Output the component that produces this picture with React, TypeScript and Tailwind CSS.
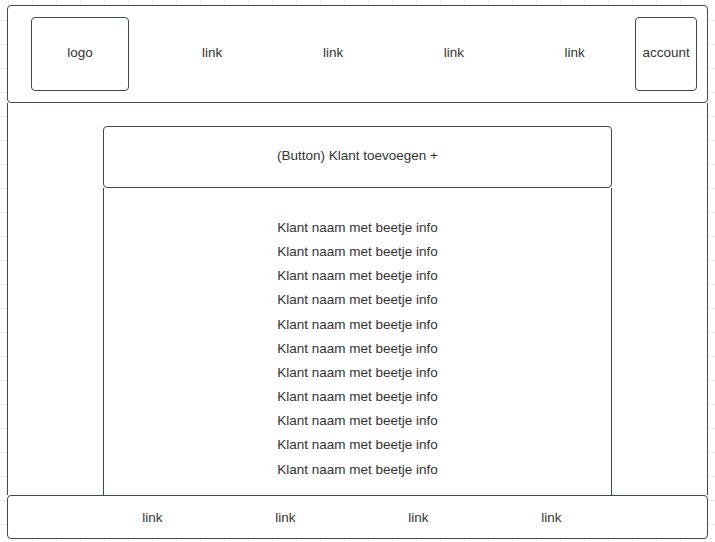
import React from "react";

const B = "border-[#42464d]";

export default function App() {
  const items = Array.from({ length: 11 }, () => "Klant naam met beetje info");
  return (
    <div
      className="w-[715px] h-[542px] overflow-hidden bg-white bg-[linear-gradient(to_right,#ebebeb_1px,transparent_1px),linear-gradient(to_bottom,#ebebeb_1px,transparent_1px)] bg-[size:24px_24px] bg-[position:8px_20px] pt-[5px] pl-[7px] font-['Liberation_Sans',Arial,sans-serif] text-[13.5px] text-[#333]"
    >
      <div className="w-[701px] h-[534px] flex flex-col">
        {/* header */}
        <header className={`h-[98px] shrink-0 flex items-center border ${B} rounded-[4px] bg-white pl-[23px] pr-[10px]`}>
          <div className={`w-[98px] h-[74px] border ${B} rounded-[4px] flex items-center justify-center pb-[2px]`}>logo</div>
          <nav className="ml-[23px] w-[484px] grid grid-cols-4 text-center pb-[2px]">
            <span>link</span>
            <span>link</span>
            <span>link</span>
            <span>link</span>
          </nav>
          <div className={`ml-auto w-[62px] h-[74px] border ${B} rounded-[4px] flex items-center justify-center pb-[2px]`}>account</div>
        </header>

        {/* middle */}
        <main className={`flex-1 border-x ${B} bg-white pt-[23px] flex flex-col`}>
          <div className="mx-auto w-[509px] flex-1 flex flex-col">
            <div className={`h-[62px] shrink-0 border ${B} rounded-[4px] flex items-center justify-center pb-[2px]`}>
              (Button) Klant toevoegen +
            </div>
            <div className={`flex-1 border-x ${B} pt-[28px] flex flex-col items-center leading-[24.15px]`}>
              {items.map((t, i) => (
                <div key={i}>{t}</div>
              ))}
            </div>
          </div>
        </main>

        {/* footer */}
        <footer className={`h-[44px] shrink-0 border ${B} rounded-[4px] bg-white flex items-center pl-[78px]`}>
          <nav className="w-[532px] grid grid-cols-4 text-center pt-[3px]">
            <span>link</span>
            <span>link</span>
            <span>link</span>
            <span>link</span>
          </nav>
        </footer>
      </div>
    </div>
  );
}
